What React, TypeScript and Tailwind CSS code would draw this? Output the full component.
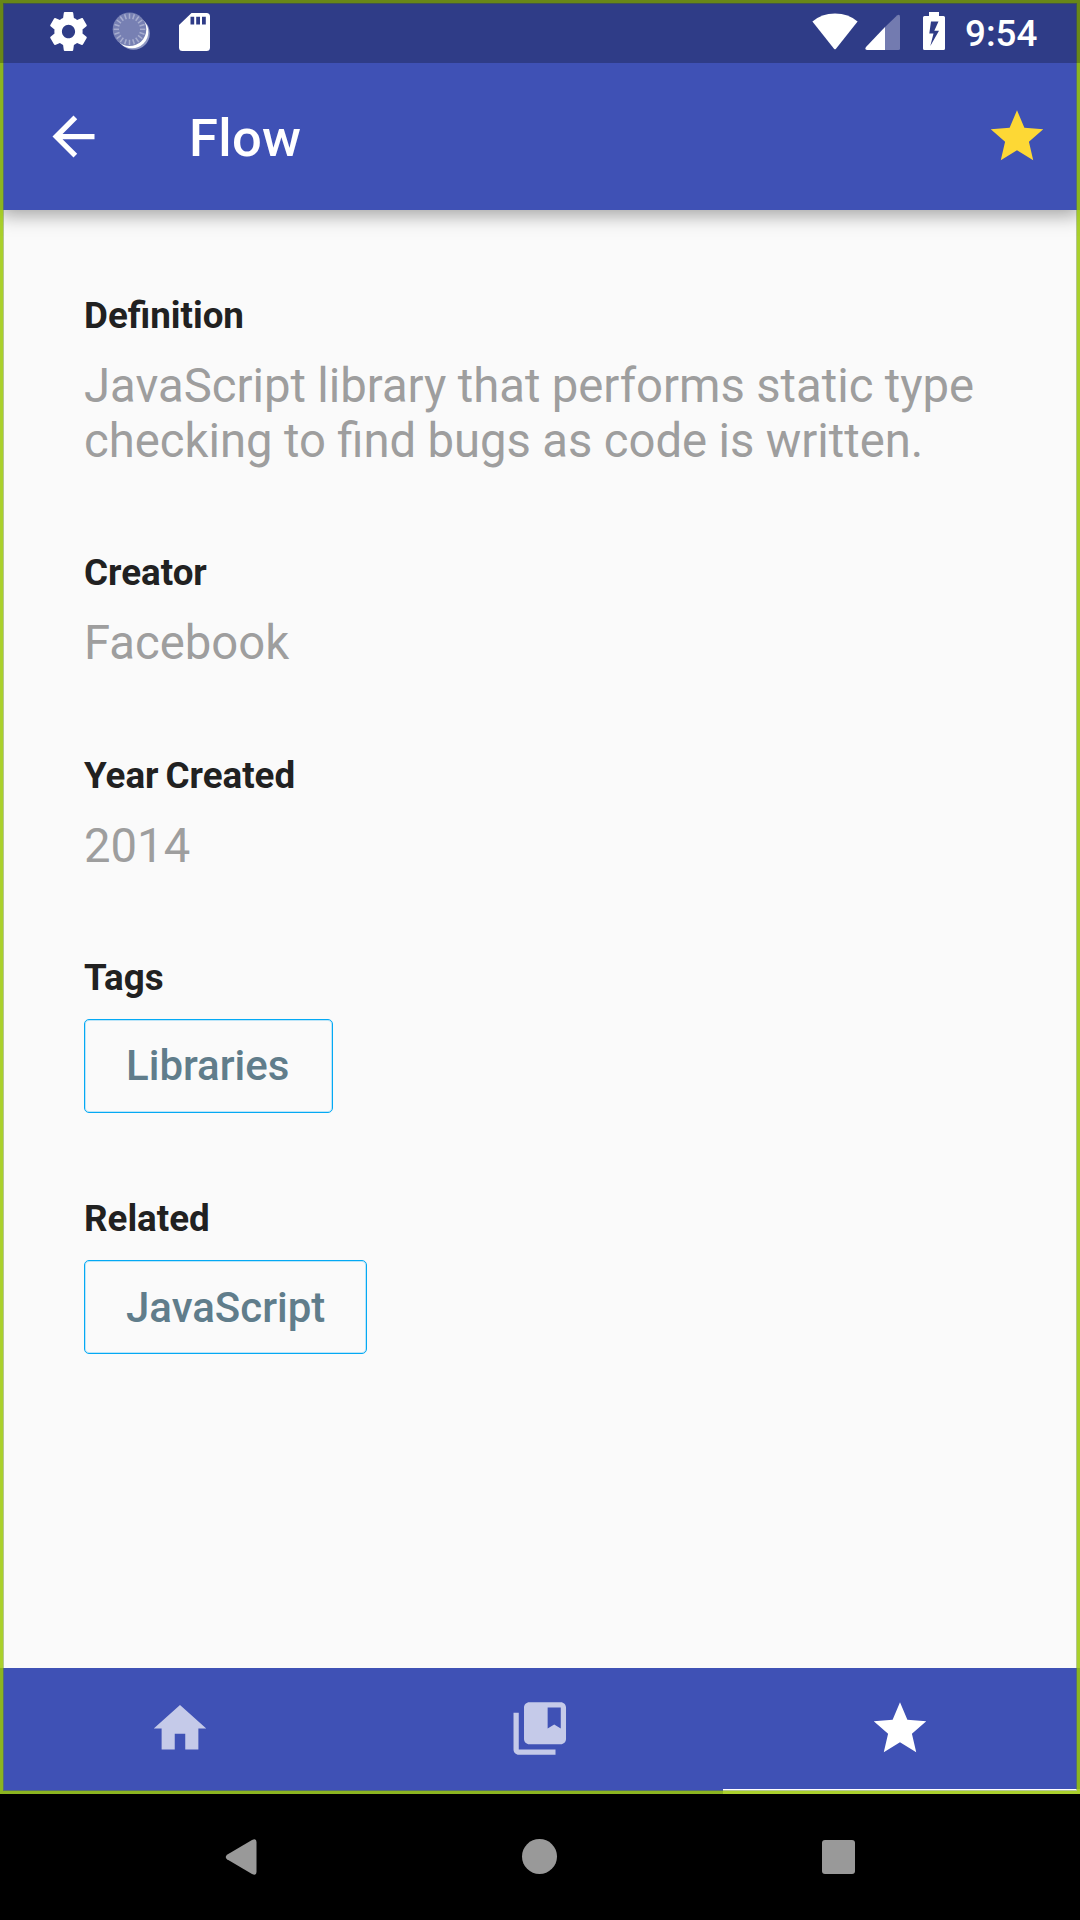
import React from "react";

type IconProps = { d: string; className: string; dx?: number };

function MaterialIcon({ d, className, dx = 0 }: IconProps) {
  return (
    <svg viewBox="0 0 24 24" className={`h-[63px] w-[63px] shrink-0 ${className}`} fill="currentColor">
      <path d={d} transform={`translate(${dx} 0)`} />
    </svg>
  );
}

const STAR = "M12 17.27L18.18 21l-1.64-7.03L22 9.24l-7.19-.61L12 2 9.19 8.63 2 9.24l5.46 4.73L5.82 21z";
const BACK = "M20 11H7.83l5.59-5.59L12 4l-8 8 8 8 1.41-1.41L7.83 13H20v-2z";
const HOME = "M10 20v-6h4v6h5v-8h3L12 3 2 12h3v8z";
const COLLECTION =
  "M4 6H2v14c0 1.1.9 2 2 2h14v-2H4V6z M20 2H8c-1.1 0-2 .9-2 2v12c0 1.1.9 2 2 2h12c1.1 0 2-.9 2-2V4c0-1.1-.9-2-2-2zm0 10l-2.5-1.5L15 12V4h5v8z";
const GEAR =
  "M19.43 12.98c.04-.32.07-.64.07-.98s-.03-.66-.07-.98l2.11-1.65c.19-.15.24-.42.12-.64l-2-3.46c-.12-.22-.39-.3-.61-.22l-2.49 1c-.52-.4-1.08-.73-1.69-.98l-.38-2.65C14.46 2.18 14.25 2 14 2h-4c-.25 0-.46.18-.49.42l-.38 2.65c-.61.25-1.17.59-1.69.98l-2.49-1c-.23-.09-.49 0-.61.22l-2 3.46c-.13.22-.07.49.12.64l2.11 1.65c-.04.32-.07.65-.07.98s.03.66.07.98l-2.11 1.65c-.19.15-.24.42-.12.64l2 3.46c.12.22.39.3.61.22l2.49-1c.52.4 1.08.73 1.69.98l.38 2.65c.03.24.24.42.49.42h4c.25 0 .46-.18.49-.42l.38-2.65c.61-.25 1.17-.59 1.69-.98l2.49 1c.23.09.49 0 .61-.22l2-3.46c.12-.22.07-.49-.12-.64l-2.11-1.65zM12 15.5c-1.93 0-3.5-1.57-3.5-3.5s1.57-3.5 3.5-3.5 3.5 1.57 3.5 3.5-1.57 3.5-3.5 3.5z";

function SpinnerIcon() {
  const ticks = Array.from({ length: 20 }, (_, i) => i * 18);
  return (
    <svg viewBox="0 0 38 38" className="ml-[25px] h-[38px] w-[38px]">
      <circle cx="21.5" cy="21.5" r="16.3" fill="#8f98c4" />
      <circle cx="20" cy="20" r="16.3" fill="#ffffff" />
      <circle cx="17.5" cy="17.3" r="16.8" fill="#7780b3" />
      {ticks.map((a) => (
        <path key={a} d="M17.5 1.5V6.8" stroke="#a7adcf" strokeWidth="1.5" transform={`rotate(${a} 17.5 17.3)`} />
      ))}
    </svg>
  );
}

function StatusBar() {
  return (
    <div className="relative z-30 flex h-[63px] items-start bg-black/25 text-white">
      <svg viewBox="2.17 2 19.66 20" className="mt-3 ml-[50px] h-[39px] w-[37px]" preserveAspectRatio="none" fill="currentColor">
        <path d={GEAR} />
      </svg>
      <div className="mt-3">
        <SpinnerIcon />
      </div>
      <svg viewBox="0 0 31 38" className="mt-[12.5px] ml-[29px] h-[38px] w-[31px]" fill="currentColor">
        <path
          fillRule="evenodd"
          d="M12.5 0H27.5Q31 0 31 3.5V34.5Q31 38 27.5 38H3.5Q0 38 0 34.5V12ZM11.5 3.8V11.5H15.2V3.8ZM17.2 3.8V11.5H21V3.8ZM23 3.8V11.5H26.8V3.8Z"
        />
      </svg>
      <svg viewBox="0 0 46 37" className="mt-[12.5px] ml-[602px] h-[37px] w-[46px]" fill="currentColor">
        <path d="M.4 8.6Q9.5 .5 23 .5Q36.500 .5 45.600 8.600L24 35.800Q23 36.900 22 35.800Z" />
      </svg>
      <svg viewBox="0 0 36 36" className="mt-3.5 ml-[7px] h-9 w-9">
        <path d="M20 13L32 1.500Q35 -.5 35 3V34.500Q35 36 33.500 36H20Z" fill="#737bb0" />
        <path d="M20 13V36H2Q-.8 35.800 1 33Z" fill="#ffffff" />
      </svg>
      <svg viewBox="0 0 22 38" className="mt-3 ml-[22px] h-[38px] w-[22px]" fill="currentColor">
        <path
          fillRule="evenodd"
          d="M6 0H16V4H20.500Q22 4 22 5.500V36.500Q22 38 20.500 38H1.500Q0 38 0 36.500V5.500Q0 4 1.500 4H6ZM8 9.500L6.300 21.500H10.500L7.300 34L16 18.800H11.300L15.500 9.500Z"
        />
      </svg>
      <span className="mt-3 ml-[20px] text-[36.75px] leading-[43px] font-medium">9:54</span>
    </div>
  );
}

function AppBar() {
  return (
    <header className="relative z-10 flex h-[147px] items-center bg-[#3f51b5] pr-8 pl-[42px] text-white shadow-[0_5px_18px_rgba(0,0,0,0.36)] [clip-path:inset(0_0_-40px_0)]">
      <MaterialIcon d={BACK} className="text-white" />
      <h1 className="mt-0.5 ml-[84px] grow text-[52.5px] leading-[62px] font-medium tracking-[0.3px]">Flow</h1>
      <MaterialIcon d={STAR} dx={0.19} className="text-[#fdd835]" />
    </header>
  );
}

function Label({ children }: { children: React.ReactNode }) {
  return (
    <h2 className="text-[36.75px] leading-[43px] font-bold text-[#212121] [word-spacing:-2.2px]">{children}</h2>
  );
}

function Field({ label, className, children }: { label: string; className: string; children: React.ReactNode }) {
  return (
    <section className={className}>
      <Label>{label}</Label>
      <p className="mt-[22px] text-[47.25px] leading-[55px] text-[#9e9e9e] [word-spacing:-0.38px]">{children}</p>
    </section>
  );
}

function ChipField({ label, chip, className }: { label: string; chip: string; className: string }) {
  return (
    <section className="mb-[84px]">
      <Label>{label}</Label>
      <button
        className={`mt-5 flex h-[94px] items-center rounded-[5px] border border-[#03a9f4] pl-[41px] text-[42px] leading-[49px] font-medium text-[#607d8b] shadow-[inset_0_0_0_1px_rgba(3,169,244,0.25)] ${className}`}
      >
        {chip}
      </button>
    </section>
  );
}

function TabBar() {
  return (
    <nav className="grid h-[126px] grid-cols-3 bg-[#3f51b5]">
      <div className="pt-[29px]">
        <MaterialIcon d={HOME} dx={0.19} className="ml-[148px] text-[#c5cae9]" />
      </div>
      <div className="pt-[29px]">
        <MaterialIcon d={COLLECTION} dx={0.1} className="ml-[148px] text-[#c5cae9]" />
      </div>
      <div className="flex flex-col justify-between pt-[29px]">
        <MaterialIcon d={STAR} dx={0.19} className="ml-[148px] text-white" />
        <div className="ml-[3px] h-[5px] w-[357px] bg-white" />
      </div>
    </nav>
  );
}

function SystemNav() {
  return (
    <div className="flex h-[126px] items-center bg-black text-[#999999]">
      <svg viewBox="0 0 32 36" className="ml-[225px] h-9 w-8" fill="currentColor">
        <path d="M27 1Q31.500 -1 31.500 3V33Q31.500 37 27 35L2 20.300Q-.5 18 2 15.700Z" />
      </svg>
      <div className="mb-px ml-[265px] h-[35px] w-[35px] rounded-full bg-[#999999]" />
      <div className="ml-[264.5px] h-[34px] w-[33.5px] rounded-[3px] bg-[#999999]" />
    </div>
  );
}

export default function App() {
  return (
    <div className="flex h-[1920px] w-[1080px] flex-col overflow-hidden bg-black font-['Roboto',sans-serif]">
      <div className="relative flex h-[1794px] flex-col bg-[#3f51b5]">
        <StatusBar />
        <AppBar />
        <main className="grow bg-[#fafafa] px-[84px] pt-[84px]">
          <Field label="Definition" className="mb-[82px]">
            JavaScript library that performs static type
            <br />
            checking to find bugs as code is written.
          </Field>
          <Field label="Creator" className="mb-[83px]">
            Facebook
          </Field>
          <Field label="Year Created" className="mb-[82px]">
            2014
          </Field>
          <ChipField label="Tags" chip="Libraries" className="w-[249px] pb-0.5" />
          <ChipField label="Related" chip="JavaScript" className="w-[283px]" />
        </main>
        <TabBar />
        <div className="pointer-events-none absolute inset-0 z-20 border-[3px] border-[#9ac703]/84 shadow-[inset_0_0_0_1px_rgba(110,145,40,0.5)]" />
      </div>
      <SystemNav />
    </div>
  );
}
